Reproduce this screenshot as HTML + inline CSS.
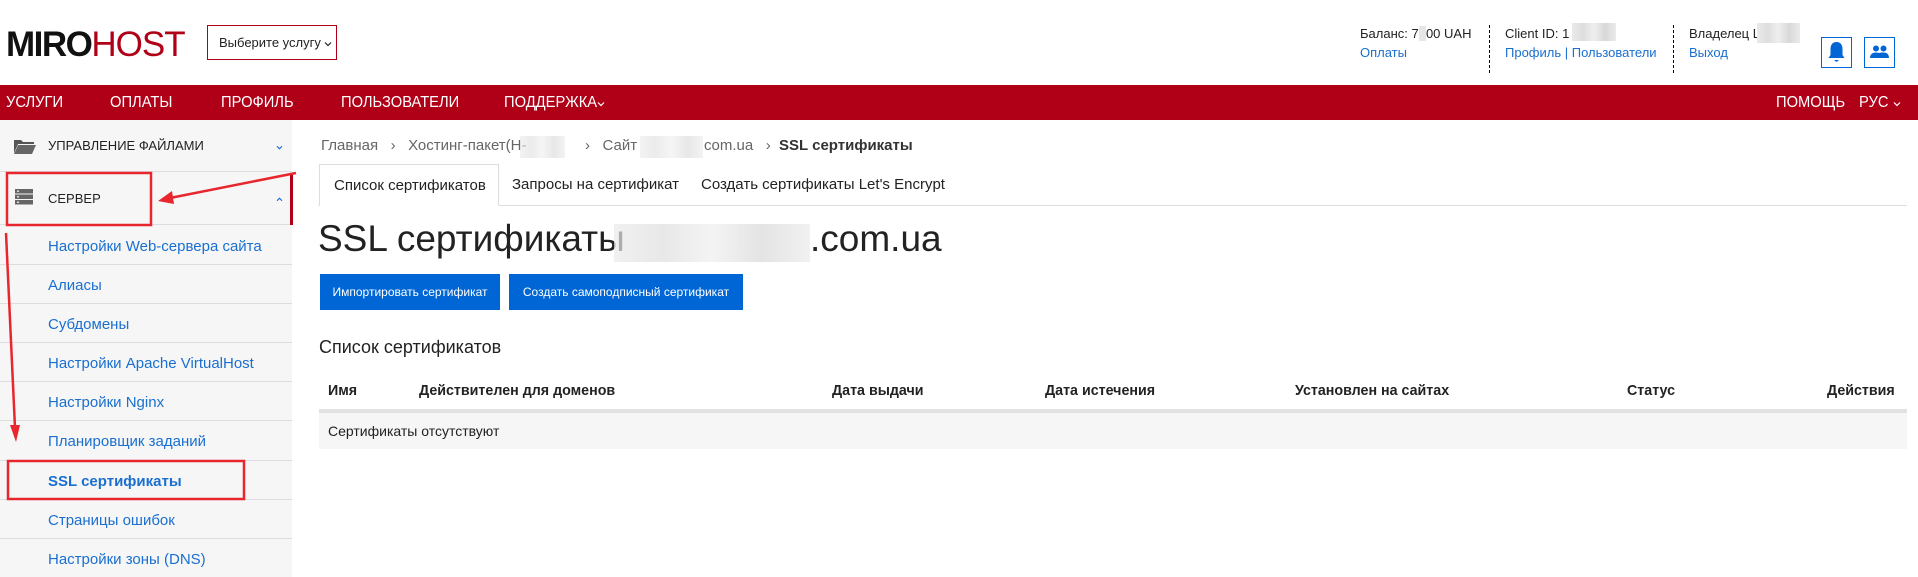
<!DOCTYPE html>
<html><head><meta charset="utf-8">
<style>
*{margin:0;padding:0;box-sizing:border-box}
body{width:1918px;height:577px;overflow:hidden;background:#fff;font-family:"Liberation Sans","DejaVu Sans",sans-serif;color:#222;position:relative}
.a{position:absolute;white-space:nowrap}
.blur{position:absolute;background:linear-gradient(90deg,#eaeaea,#dedede,#efefef,#d8d8d8,#ebebeb)}
.nav{position:absolute;left:0;top:85px;width:1918px;height:35px;background:#b00018;color:#fff;font-size:16px}
.nav span{position:absolute;top:9px;transform:scaleX(.92);transform-origin:left}
.side{position:absolute;left:0;top:120px;width:292px;height:457px;background:#f6f6f6}
.row{position:absolute;left:0;width:292px;border-bottom:1px solid #ddd}
.sub{position:absolute;left:48px;font-size:15px;color:#1a6fd0}
.lnk{color:#1a6fd0}
.th{position:absolute;top:382px;font-size:15px;font-weight:bold;color:#222;transform:scaleX(.95);transform-origin:left}
.btn{position:absolute;top:274px;height:36px;background:#0066d6;color:#fff;font-size:12px;line-height:36px;text-align:center}
.chev{display:inline-block;vertical-align:middle}
</style></head><body>
<div class="a" style="left:6px;top:25px;font-size:35px;letter-spacing:-1.5px;color:#111;font-weight:bold">MIRO<span style="color:#b00018;font-weight:normal;letter-spacing:-1px">HOST</span></div>
<div class="a" style="left:207px;top:25px;width:130px;height:35px;border:1px solid #b00018;font-size:13px;line-height:33px;padding-left:11px">Выберите услугу <svg class="chev" width="8" height="6" viewBox="0 0 8 6"><path d="M1 1.5l3 3 3-3" stroke="#222" fill="none" stroke-width="1.2"/></svg></div>

<div class="a" style="left:1360px;top:26px;font-size:13px">Баланс: 7<span style="background:#e6e6e6;color:#e6e6e6">7</span>00 UAH</div>
<div class="a lnk" style="left:1360px;top:45px;font-size:13px">Оплаты</div>
<div class="a" style="left:1489px;top:25px;height:48px;border-left:1px dashed #000"></div>
<div class="a" style="left:1505px;top:26px;font-size:13px">Client ID: 1</div>
<div class="blur" style="left:1572px;top:23px;width:44px;height:18px"></div>
<div class="a lnk" style="left:1505px;top:45px;font-size:13px">Профиль | Пользователи</div>
<div class="a" style="left:1673px;top:25px;height:48px;border-left:1px dashed #000"></div>
<div class="a" style="left:1689px;top:26px;font-size:13px">Владелец L</div>
<div class="blur" style="left:1757px;top:23px;width:43px;height:20px"></div>
<div class="a lnk" style="left:1689px;top:45px;font-size:13px">Выход</div>
<div class="a" style="left:1821px;top:37px;width:31px;height:31px;border:1px solid #0066d6">
<svg width="29" height="29" viewBox="0 0 29 29"><path d="M14.5 4c-4 0-6 3-6 7v6l-2 3h16l-2-3v-6c0-4-2-7-6-7z" fill="#0066d6"/><path d="M12 22h5l-2.5 2z" fill="#0066d6"/></svg></div>
<div class="a" style="left:1864px;top:37px;width:31px;height:31px;border:1px solid #0066d6">
<svg width="29" height="29" viewBox="0 0 29 29" fill="#0066d6"><circle cx="11" cy="10.5" r="3"/><circle cx="18.5" cy="10.5" r="3"/><path d="M5 20c0-4 3-5.5 6-5.5s6 1.5 6 5.5z"/><path d="M15 20c0-2 0-3.5-1-5 1.5-.6 3-.5 4.5-.5 3 0 5.5 1.5 5.5 5.5z"/></svg></div>

<div class="nav"><span style="left:6px">УСЛУГИ</span><span style="left:110px">ОПЛАТЫ</span><span style="left:221px">ПРОФИЛЬ</span><span style="left:341px">ПОЛЬЗОВАТЕЛИ</span><span style="left:504px">ПОДДЕРЖКА</span>
<svg class="a" style="left:597px;top:16px" width="8" height="6" viewBox="0 0 8 6"><path d="M1 1.5l3 3 3-3" stroke="#fff" fill="none" stroke-width="1.2"/></svg>
<span style="left:1776px">ПОМОЩЬ</span><span style="left:1859px">РУС</span>
<svg class="a" style="left:1893px;top:16px" width="8" height="6" viewBox="0 0 8 6"><path d="M1 1.5l3 3 3-3" stroke="#fff" fill="none" stroke-width="1.2"/></svg></div>

<div class="side">
<div class="row" style="top:0;height:52px"></div>
<svg class="a" style="left:14px;top:18px" width="22" height="16" viewBox="0 0 22 16"><path d="M0 2h7l2 2h11v2H4L0 15z" fill="#555"/><path d="M4 7h18l-4 9H0z" fill="#666"/></svg>
<div class="a" style="left:48px;top:18px;font-size:13px;color:#222">УПРАВЛЕНИЕ ФАЙЛАМИ</div>
<svg class="a" style="left:276px;top:25px" width="7" height="5" viewBox="0 0 8 6"><path d="M1 1.5l3 3 3-3" stroke="#1a6fd0" fill="none" stroke-width="1.4"/></svg>
<div class="row" style="top:52px;height:53px"></div>
<div class="a" style="left:290px;top:55px;width:3px;height:50px;background:#b00018"></div>
<svg class="a" style="left:15px;top:69px" width="18" height="16" viewBox="0 0 18 16"><rect y="0" width="18" height="4.5" fill="#666"/><rect y="5.5" width="18" height="4.5" fill="#666"/><rect y="11" width="18" height="4.5" fill="#666"/><rect x="2" y="1.5" width="2" height="1.5" fill="#ddd"/><rect x="2" y="7" width="2" height="1.5" fill="#ddd"/><rect x="2" y="12.5" width="2" height="1.5" fill="#ddd"/></svg>
<div class="a" style="left:48px;top:71px;font-size:13px;color:#222">СЕРВЕР</div>
<svg class="a" style="left:276px;top:77px" width="7" height="5" viewBox="0 0 8 6"><path d="M1 4.5l3-3 3 3" stroke="#1a6fd0" fill="none" stroke-width="1.4"/></svg>
<div class="row" style="top:105px;height:40px"></div><div class="sub" style="top:118px">Настройки Web-сервера сайта</div>
<div class="row" style="top:145px;height:39px"></div><div class="sub" style="top:157px">Алиасы</div>
<div class="row" style="top:184px;height:39px"></div><div class="sub" style="top:196px">Субдомены</div>
<div class="row" style="top:223px;height:39px"></div><div class="sub" style="top:235px">Настройки Apache VirtualHost</div>
<div class="row" style="top:262px;height:39px"></div><div class="sub" style="top:274px">Настройки Nginx</div>
<div class="row" style="top:301px;height:40px"></div><div class="sub" style="top:313px">Планировщик заданий</div>
<div class="row" style="top:341px;height:39px"></div><div class="sub" style="top:353px;font-weight:bold">SSL сертификаты</div>
<div class="row" style="top:380px;height:39px"></div><div class="sub" style="top:392px">Страницы ошибок</div>
<div class="sub" style="top:431px">Настройки зоны (DNS)</div>
</div>

<div class="a" style="left:321px;top:137px;font-size:15px;color:#666">Главная &nbsp; › &nbsp; Хостинг-пакет(H-</div>
<div class="blur" style="left:520px;top:136px;width:45px;height:22px;opacity:.6"></div>
<div class="a" style="left:585px;top:137px;font-size:15px;color:#666">› &nbsp; Сайт</div>
<div class="blur" style="left:640px;top:136px;width:63px;height:22px;opacity:.6"></div>
<div class="a" style="left:704px;top:137px;font-size:15px;color:#666">com.ua &nbsp; › &nbsp;<b style="color:#333">SSL сертификаты</b></div>

<div class="a" style="left:318px;top:205px;width:1589px;border-top:1px solid #ddd"></div>
<div class="a" style="left:319px;top:164px;width:180px;height:42px;border:1px solid #ddd;border-bottom:1px solid #fff;background:#fff"></div>
<div class="a" style="left:334px;top:177px;font-size:15px">Список сертификатов</div>
<div class="a" style="left:512px;top:176px;font-size:15px">Запросы на сертификат</div>
<div class="a" style="left:701px;top:176px;font-size:15px">Создать сертификаты Let's Encrypt</div>

<div class="a" style="left:318px;top:218px;font-size:37px;color:#222">SSL сертификаты</div>
<div class="blur" style="left:614px;top:224px;width:196px;height:38px;opacity:.7"></div>
<div class="a" style="left:810px;top:218px;font-size:37px;color:#222">.com.ua</div>
<div class="btn" style="left:320px;width:180px">Импортировать сертификат</div>
<div class="btn" style="left:509px;width:234px">Создать самоподписный сертификат</div>

<div class="a" style="left:319px;top:337px;font-size:18px">Список сертификатов</div>
<div class="th" style="left:328px">Имя</div>
<div class="th" style="left:419px">Действителен для доменов</div>
<div class="th" style="left:832px">Дата выдачи</div>
<div class="th" style="left:1045px">Дата истечения</div>
<div class="th" style="left:1295px">Установлен на сайтах</div>
<div class="th" style="left:1627px">Статус</div>
<div class="th" style="left:1827px">Действия</div>
<div class="a" style="left:319px;top:409px;width:1588px;height:4px;background:#e2e2e2"></div>
<div class="a" style="left:319px;top:413px;width:1588px;height:36px;background:#f6f6f6"></div>
<div class="a" style="left:328px;top:423px;font-size:14px">Сертификаты отсутствуют</div>

<svg class="a" style="left:0;top:0" width="1918" height="577">
<rect x="7" y="173" width="144" height="52" fill="none" stroke="#e8262d" stroke-width="2.5"/>
<rect x="8" y="461" width="236" height="38" fill="none" stroke="#e8262d" stroke-width="2.5"/>
<line x1="296" y1="173" x2="170" y2="198" stroke="#e8262d" stroke-width="2.5"/>
<polygon points="158,201 172,191 174,204" fill="#e8262d"/>
<line x1="6" y1="233" x2="15" y2="428" stroke="#e8262d" stroke-width="2.5"/>
<polygon points="16,442 10,425 20,425" fill="#e8262d"/>
</svg>
</body></html>
